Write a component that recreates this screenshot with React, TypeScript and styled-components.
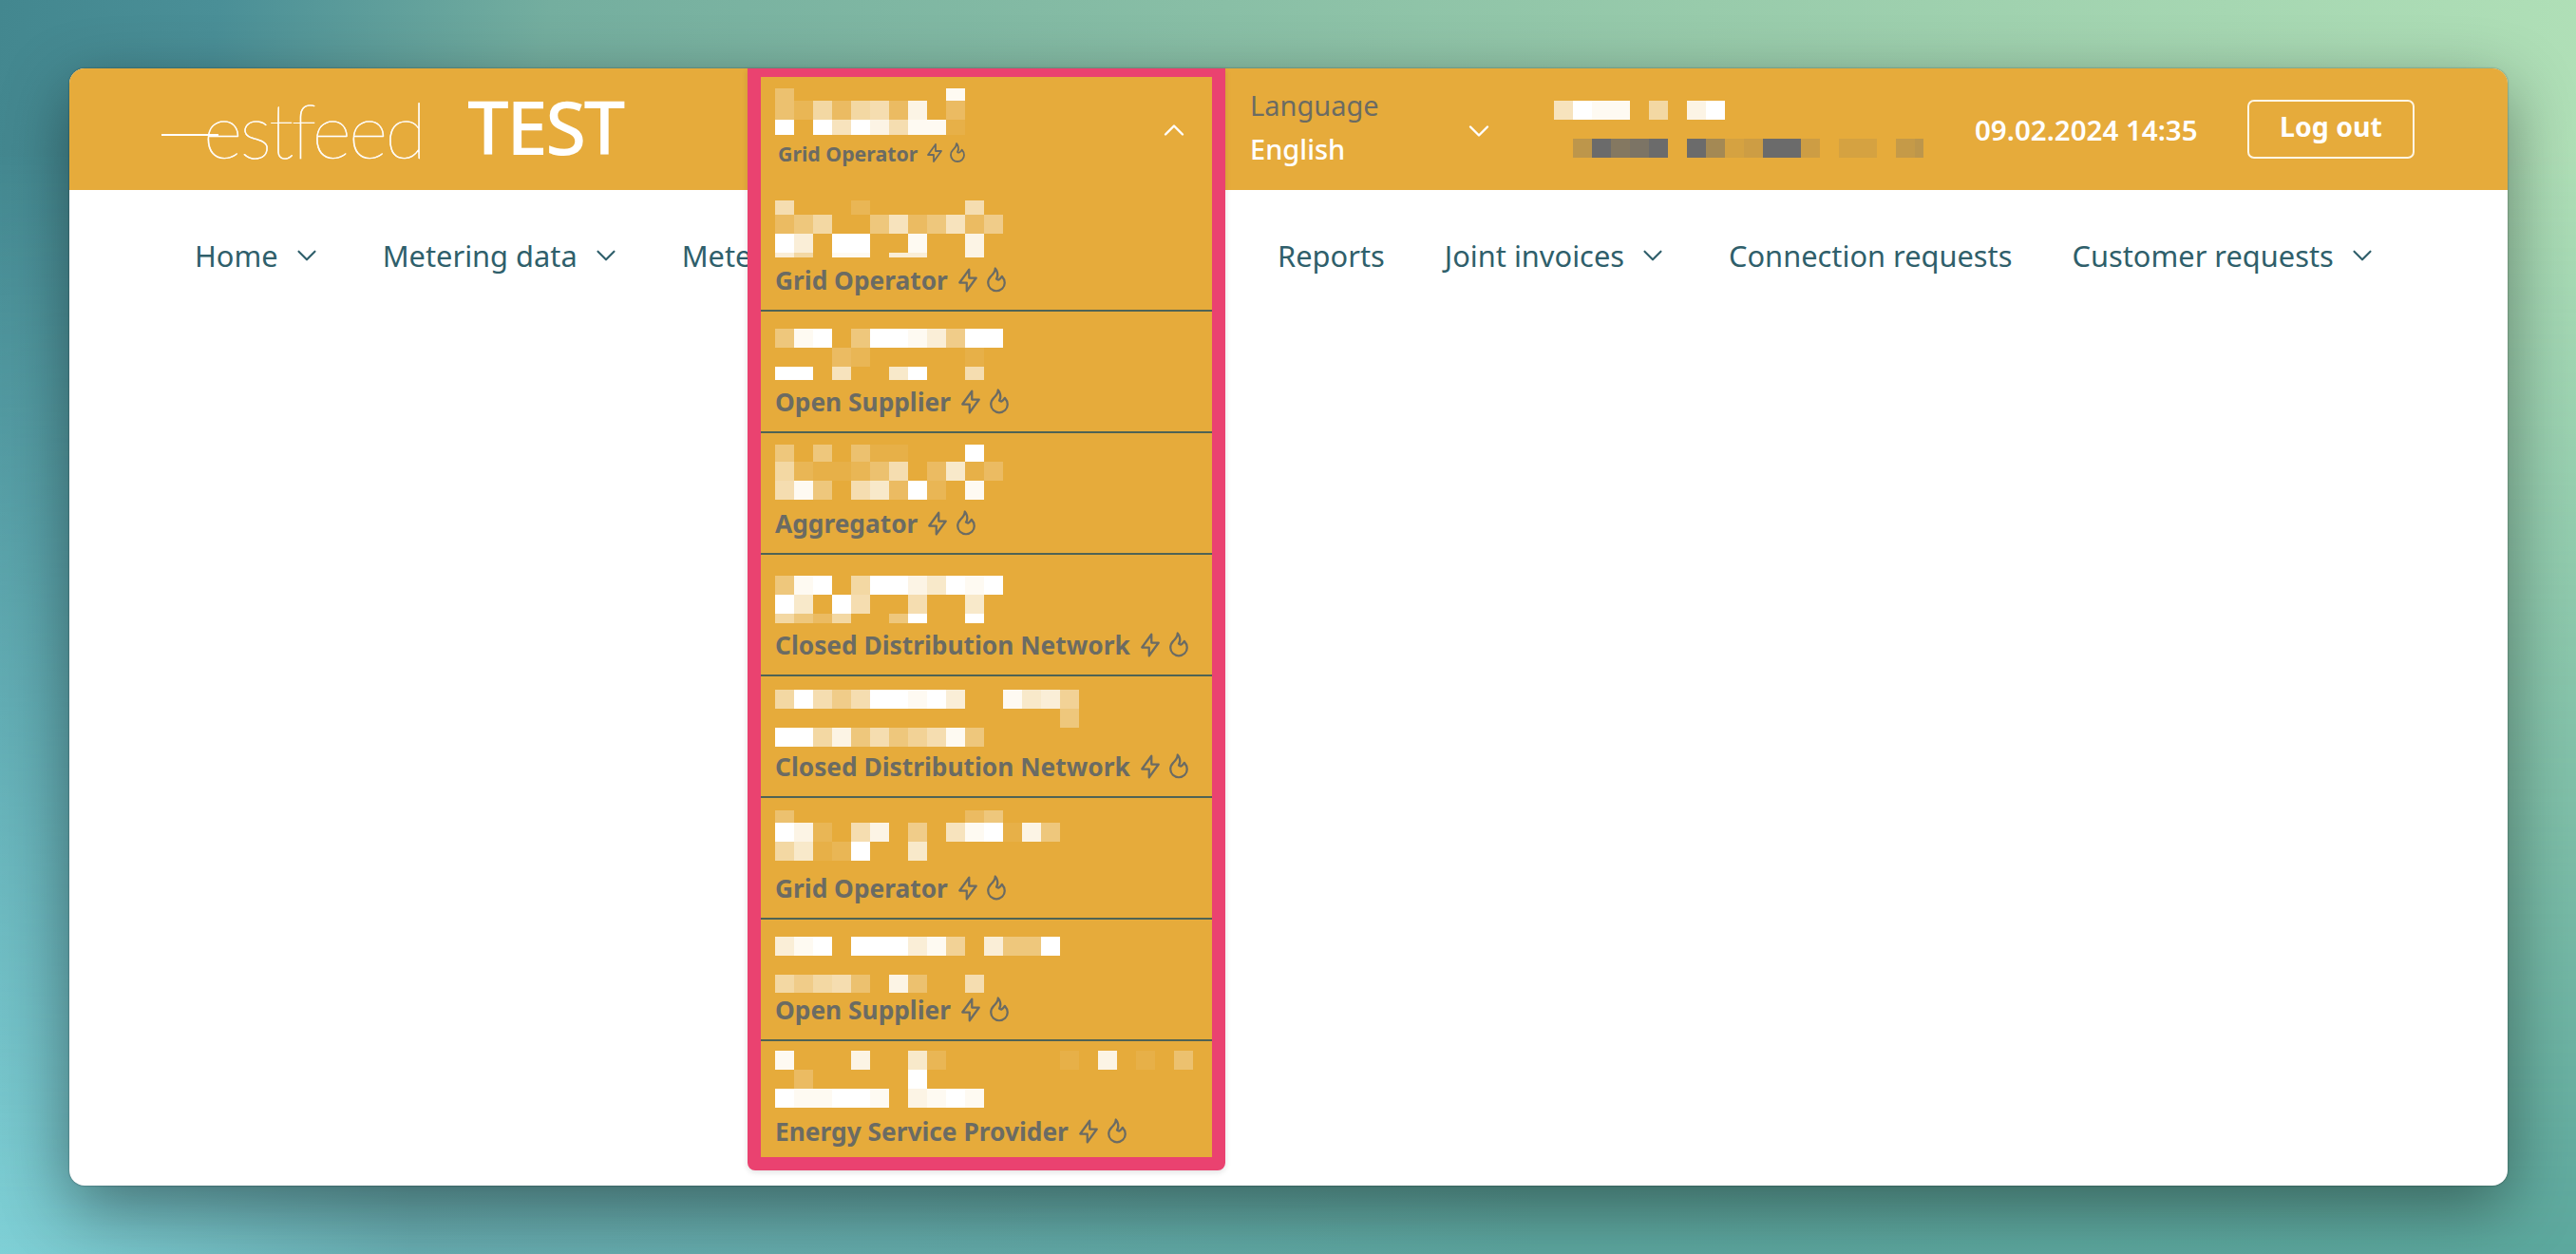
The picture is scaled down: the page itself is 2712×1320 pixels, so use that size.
import React, { FC } from "react";
import styled, { createGlobalStyle } from "styled-components";
import { TbBolt, TbChevronDown, TbChevronUp, TbFlame } from "react-icons/tb";

const GlobalStyle = createGlobalStyle`
  html, body {
    margin: 0;
    padding: 0;
    width: 2712px;
    height: 1320px;
    overflow: hidden;
    font-family: "Noto Sans", sans-serif;
  }
`;

const Backdrop = styled.div`
  position: relative;
  box-sizing: border-box;
  width: 2712px;
  height: 1320px;
  padding: 72px 72px 72px 73px;
  background: linear-gradient(90deg, #7fd0d6 0, #68adb1 16%, #5ca69f 60%, #5ca89e 100%);
  &::before {
    content: "";
    position: absolute;
    inset: 0;
    background: linear-gradient(98deg, #43878f 0, #4a8f97 8%, #74ae9f 20%, #98cbab 62%, #b4e3b9 100%);
    -webkit-mask-image: linear-gradient(to bottom, #000 0, #000 12%, transparent 100%);
    mask-image: linear-gradient(to bottom, #000 0, #000 12%, transparent 100%);
  }
`;

const Window = styled.div`
  position: relative;
  height: 1176px;
  background: #fff;
  border-radius: 16px;
  box-shadow: 0 0 2px rgba(0, 0, 0, 0.45), 0 22px 70px rgba(0, 0, 0, 0.42);
`;

const TopBar = styled.header`
  display: flex;
  align-items: center;
  box-sizing: border-box;
  height: 128px;
  padding-left: 97px;
  background: #e6ab3b;
  border-radius: 16px 16px 0 0;
  color: #fff;
`;

const Logo = styled.div`
  display: flex;
  align-items: center;
  width: 617px;
  flex: none;
`;

const LogoDash = styled.span`
  width: 60px;
  height: 2px;
  margin: 12px -16px 0 0;
  background: #fff;
`;

const LogoWord = styled.span`
  font-family: Lato, sans-serif;
  font-weight: 100;
  font-size: 80px;
  line-height: 100px;
  letter-spacing: -2.8px;
  -webkit-text-stroke: 0.6px #fff;
`;

const LogoTag = styled.span`
  margin-left: 46px;
  margin-top: -6px;
  font-weight: 500;
  font-size: 78px;
  line-height: 100px;
  letter-spacing: -2.6px;
`;

const DropdownSlot = styled.div`
  position: relative;
  flex: none;
  width: 503px;
  height: 128px;
`;

const DropdownPanel = styled.div`
  position: absolute;
  z-index: 2;
  top: 0;
  left: 0;
  width: 503px;
  box-sizing: border-box;
  background: #e6ab3b;
  border: 14px solid #ea4270;
  border-top-width: 9px;
  border-radius: 0 0 8px 8px;
  box-shadow: 0 2px 6px rgba(0, 0, 0, 0.12);
`;

const CurrentRole = styled.div`
  position: relative;
  height: 119px;
  padding-left: 15px;
`;

const RoleItem = styled.div<{ $last?: boolean }>`
  box-sizing: border-box;
  height: ${(p) => (p.$last ? 122 : 128)}px;
  padding-left: 15px;
  border-bottom: ${(p) => (p.$last ? "none" : "2px solid #4f6355")};
`;

const RoleLabel = styled.div<{ $small?: boolean }>`
  display: flex;
  align-items: center;
  height: 32px;
  padding-left: ${(p) => (p.$small ? 3 : 0)}px;
  margin-top: ${(p) => (p.$small ? -8 : -5)}px;
  color: #6b6b63;
  font-weight: 700;
  font-size: ${(p) => (p.$small ? 21.3 : 26.3)}px;
  svg {
    flex: none;
    stroke-width: 1.8;
  }
  svg:first-of-type {
    margin-left: 6px;
  }
`;

const CollapseIcon = styled(TbChevronUp)`
  position: absolute;
  right: 22px;
  top: 38px;
  stroke-width: 1.6;
`;

const Language = styled.div`
  display: flex;
  align-items: center;
  flex: none;
  width: 346px;
  padding-left: 26px;
  box-sizing: border-box;
`;

const LanguageText = styled.div`
  width: 223px;
  margin-top: -4px;
  font-size: 29px;
  line-height: 46px;
`;

const LanguageCaption = styled.div`
  color: #6b6b63;
`;

const LanguageValue = styled.div`
  font-weight: 500;
`;

const ChevronWhite = styled(TbChevronDown)`
  flex: none;
  margin-top: 3px;
  stroke-width: 1.6;
`;

const UserBlock = styled.div`
  flex: none;
  width: 389px;
  margin-right: 54px;
`;

const DateTime = styled.div`
  flex: none;
  width: 287px;
  font-weight: 600;
  font-size: 29.5px;
`;

const LogoutButton = styled.button`
  box-sizing: border-box;
  width: 176px;
  height: 62px;
  background: transparent;
  border: 2px solid #fff6e4;
  border-radius: 7px;
  color: #fff;
  font-family: inherit;
  font-weight: 700;
  font-size: 28.5px;
  padding: 0 0 6px;
`;

const Nav = styled.nav`
  display: flex;
  align-items: center;
  gap: 63px;
  height: 138px;
  padding-left: 132px;
  color: #2f5f6b;
  font-size: 30.8px;
`;

const NavItem = styled.div`
  display: flex;
  align-items: center;
  white-space: nowrap;
`;

const NavChevron = styled(TbChevronDown)`
  flex: none;
  margin-left: 13px;
  stroke-width: 1.5;
`;

type MosaicRow = [number, number, string];

const Mosaic: FC<{ rows: MosaicRow[]; color?: string; height: number; width: number }> = ({
  rows,
  color = "#fff",
  height,
  width
}) => (
  <svg width={width} height={height} style={{ display: "block" }} aria-hidden="true">
    {rows.map(([y, h, cells]) =>
      cells.split("").map((c, i) =>
        c === "0" ? null : (
          <rect key={`${y}-${i}`} x={i * 20} y={y} width={20} height={h} fill={color} fillOpacity={parseInt(c, 16) / 15} />
        )
      )
    )}
  </svg>
);

const ROLES: { label: string; rows: MosaicRow[] }[] = [
  {
    label: "Grid Operator",
    rows: [
      [11, 15, "90002000009"],
      [26, 20, "358005a35a36"],
      [46, 20, "fc0ff00e00d"],
      [66, 5, "c80ee0cc00d"]
    ]
  },
  {
    label: "Open Supplier",
    rows: [
      [18, 20, "5ef05ffec6ff"],
      [38, 20, "000320000010"],
      [58, 14, "ff0a00bf009"]
    ]
  },
  {
    label: "Aggregator",
    rows: [
      [12, 18, "5050411000f"],
      [30, 20, "821124903b13"],
      [50, 20, "9e509b3f20e"]
    ]
  },
  {
    label: "Closed Distribution Network",
    rows: [
      [22, 20, "5ef08ffdbfef"],
      [42, 20, "fb0f900900b"],
      [62, 10, "8538005f00f"]
    ]
  },
  {
    label: "Closed Distribution Network",
    rows: [
      [14, 20, "8f969ffefc00ebc7"],
      [34, 20, "0000000000000005"],
      [54, 20, "ff8d59579e5"]
    ]
  },
  {
    label: "Grid Operator",
    rows: [
      [13, 13, "400000000035"],
      [26, 20, "fd209d060aef1d5"],
      [46, 20, "8b12f00b"]
    ]
  },
  {
    label: "Open Supplier",
    rows: [
      [18, 20, "cef0fffce70c55f"],
      [58, 19, "868940d4009"]
    ]
  },
  {
    label: "Energy Service Provider",
    rows: [
      [10, 20, "e000d00b200000010d0104"],
      [30, 20, "0300000f"],
      [50, 20, "feeffe0defe"]
    ]
  }
];

const CURRENT_ROWS: MosaicRow[] = [
  [12, 13, "400000000e"],
  [25, 20, "4283893d03"],
  [45, 16, "f0fafd9ee1"]
];

const NAV_ITEMS: { label: string; hasMenu: boolean }[] = [
  { label: "Home", hasMenu: true },
  { label: "Metering data", hasMenu: true },
  { label: "Metering points", hasMenu: true },
  { label: "Agreements", hasMenu: true },
  { label: "Reports", hasMenu: false },
  { label: "Joint invoices", hasMenu: true },
  { label: "Connection requests", hasMenu: false },
  { label: "Customer requests", hasMenu: true }
];

const App: FC = () => (
  <>
    <GlobalStyle />
    <Backdrop>
      <Window>
        <TopBar>
          <Logo>
            <LogoDash />
            <LogoWord>estfeed</LogoWord>
            <LogoTag>TEST</LogoTag>
          </Logo>
          <DropdownSlot>
            <DropdownPanel>
              <CurrentRole>
                <Mosaic rows={CURRENT_ROWS} width={240} height={72} />
                <RoleLabel $small>
                  Grid Operator
                  <TbBolt size={24} />
                  <TbFlame size={24} />
                </RoleLabel>
                <CollapseIcon size={36} color="#fff" />
              </CurrentRole>
              {ROLES.map((role, i) => (
                <RoleItem key={i} $last={i === ROLES.length - 1}>
                  <Mosaic rows={role.rows} width={460} height={84} />
                  <RoleLabel>
                    {role.label}
                    <TbBolt size={30} />
                    <TbFlame size={30} />
                  </RoleLabel>
                </RoleItem>
              ))}
            </DropdownPanel>
          </DropdownSlot>
          <Language>
            <LanguageText>
              <LanguageCaption>Language</LanguageCaption>
              <LanguageValue>English</LanguageValue>
            </LanguageText>
            <ChevronWhite size={36} color="#fff" />
          </Language>
          <UserBlock>
            <Mosaic width={389} height={40} rows={[[0, 20, "afee080df"]]} />
            <Mosaic width={389} height={20} color="#6b6b6b" rows={[[0, 20, "05fcdf0f823ff3022045"]]} />
          </UserBlock>
          <DateTime>09.02.2024 14:35</DateTime>
          <LogoutButton>Log out</LogoutButton>
        </TopBar>
        <Nav>
          {NAV_ITEMS.map((item) => (
            <NavItem key={item.label}>
              {item.label}
              {item.hasMenu && <NavChevron size={34} />}
            </NavItem>
          ))}
        </Nav>
      </Window>
    </Backdrop>
  </>
);

export default App;
